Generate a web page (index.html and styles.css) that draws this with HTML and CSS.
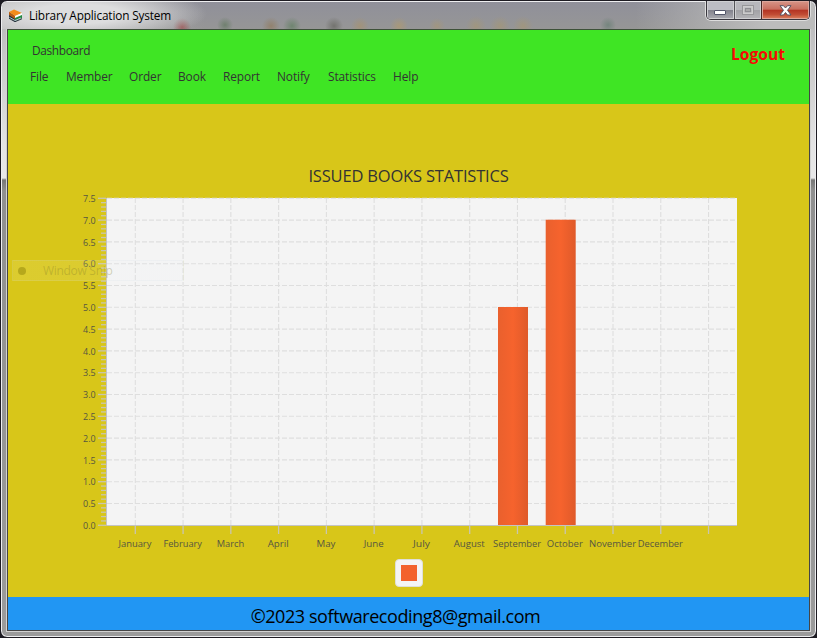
FILE: index.html
```html
<!DOCTYPE html>
<html lang="en">
<head>
<meta charset="utf-8">
<title>Library Application System</title>
<link rel="stylesheet" href="styles.css">
</head>
<body>
<div class="window">
  <div class="titlebar">
    <div class="glass"></div>
    <svg class="app-icon" width="15" height="15" viewBox="0 0 15 15">
      <path d="M1 4 7 8v5.500L1 10z" fill="#27343d"/>
      <path d="M1 4 7 8v3L1 7z" fill="#b65b12"/>
      <path d="M1 4 6 1.500 14 5 7 8z" fill="#f28c1c"/>
      <path d="M7 8l7-3v2L7 10z" fill="#fff"/>
      <path d="M7 10l7-3v3l-7 3z" fill="#238a43"/>
      <path d="M1.500 9.500 7 12.500l6-2.500" stroke="#b9cdd8" fill="none"/>
      <path d="M1 10.300 7 13.700l7-3" stroke="#26323b" fill="none"/>
    </svg>
    <span class="window-title">Library Application System</span>
    <div class="controls">
      <div class="control minimize"><svg width="13" height="6"><rect x=".5" y=".5" width="11" height="4" rx=".5" fill="#fff" stroke="#53566a"/></svg></div>
      <div class="control maximize"><svg width="13" height="10"><rect x="1.500" y="1.500" width="9" height="7" fill="none" stroke="#ccc" stroke-width="2"/><rect x=".5" y=".5" width="11" height="9" fill="none" stroke="#97979a"/><rect x="3.500" y="3.500" width="5" height="3" fill="#aaa" stroke="#8e8e92"/></svg></div>
      <div class="control close"><svg width="13" height="11" viewBox="0 0 13 11"><path d="M1 .7h3.500L6.500 3 8.500.7H12L8.500 5.300 12 10H8.500l-2-2.500L4.500 10H1l3.500-4.700z" fill="#fff" stroke="#575363"/></svg></div>
    </div>
  </div>
  <div class="client">
    <header class="header">
      <div class="nav">
        <div class="dashboard">Dashboard</div>
        <nav class="menu">
          <span>File</span><span>Member</span><span>Order</span><span>Book</span><span>Report</span><span>Notify</span><span>Statistics</span><span>Help</span>
        </nav>
      </div>
      <div class="logout">Logout</div>
    </header>
    <main class="content">
      <div class="snip"><i class="snip-dot"></i><span>Window Snip</span></div>
      <h1 class="chart-title">ISSUED BOOKS STATISTICS</h1>
      <svg class="chart" width="801" height="370" viewBox="8 190 801 370">
        <defs>
          <linearGradient id="bar"><stop offset="0" stop-color="#e9602d"/><stop offset=".5" stop-color="#f6632d"/><stop offset="1" stop-color="#df5a2a"/></linearGradient>
        </defs>
        <rect x="107" y="198" width="630" height="327" fill="#f4f4f4"/>
        <g id="grid" class="grid"></g>
        <g id="ticks" class="ticks"></g>
        <rect x="498" y="307" width="30" height="218" fill="url(#bar)"/>
        <rect x="545.7" y="219.700" width="30" height="305.300" fill="url(#bar)"/>
        <path class="axis" d="M106.500 198v327.500H737"/>
        <g id="labels" class="labels"></g>
      </svg>
      <div class="legend"><i class="swatch"></i></div>
    </main>
    <footer class="footer"><span>©2023 softwarecoding8@gmail.com</span></footer>
  </div>
</div>
<script src="chart.js"></script>
</body>
</html>
```
FILE: chart.js
```js
const ns = 'http://www.w3.org/2000/svg';
const bottom = 525.3, step = 21.8, column = 47.77, first = 135.3;
const months = [['January', 33], ['February', 38.5], ['March', 27.5], ['April', 21], ['May', 19], ['June', 20], ['July', 17], ['August', 31], ['September', 48], ['October', 36], ['November', 47], ['December', 45]];

function line(parent, x1, y1, x2, y2) {
  const el = document.createElementNS(ns, 'line');
  Object.entries({ x1, y1, x2, y2 }).forEach(([k, v]) => el.setAttribute(k, v));
  parent.appendChild(el);
}

function label(text, x, y, width, anchor) {
  const el = document.createElementNS(ns, 'text');
  el.setAttribute('x', x);
  el.setAttribute('y', y);
  el.setAttribute('textLength', width);
  el.setAttribute('lengthAdjust', 'spacingAndGlyphs');
  el.setAttribute('text-anchor', anchor);
  el.textContent = text;
  document.getElementById('labels').appendChild(el);
}

const grid = document.getElementById('grid');
const ticks = document.getElementById('ticks');
for (let i = 0; i <= 15; i++) {
  const y = bottom - i * step;
  if (i > 0) line(grid, 107, y, 737, y);
  line(ticks, 98, y, 106, y);
  label((i / 2).toFixed(1), 95.7, y + 3.6, 12.6, 'end');
  if (i < 15) {
    for (let j = 1; j < 5; j++) line(ticks, 101, y - j * step / 5, 106, y - j * step / 5);
  }
}
for (let i = 0; i < 13; i++) {
  const x = first + i * column;
  line(grid, x, 198, x, 525);
  line(ticks, x, 526, x, 534);
  if (months[i]) label(months[i][0], x - 0.4, 547.3, months[i][1], 'middle');
}
```
FILE: styles.css
```css
* { box-sizing: border-box; }
html { background: #1c1b22; }
body { margin: 0; font-family: "Open Sans", "Noto Sans", sans-serif; }
.window {
  width: 817px; height: 638px; padding: 0 6px 6px 5px;
  display: flex; flex-direction: column;
  border: 1px solid #1d1b22; border-radius: 7px;
  box-shadow: inset 0 0 0 1px #eeeef0;
  background: linear-gradient(#b3b3b6 0, #c8c8c8 55px, #e4e4e4 145px, #e8e8e8 177px, #777 179px, #909090 190px, #9b9b9b 100%);
}
.titlebar {
  position: relative; height: 28px; display: flex; align-items: center;
  margin: 0 -5px 0 -4px; padding-left: 6px;
  overflow: hidden;
}
.glass {
  position: absolute; inset: 1px 1px 0 0; border-radius: 5px 5px 0 0;
  background:
    radial-gradient(ellipse 130px 28px at 75px 12px, #ddddde 35%, transparent 100%),
    radial-gradient(circle 8px at 223px 23px, #70806f, transparent),
    radial-gradient(circle 9px at 180px 25px, #985c5c, transparent),
    radial-gradient(circle 9px at 269px 24px, #92826e, transparent),
    radial-gradient(circle 9px at 290px 24px, #6f8570, transparent),
    radial-gradient(circle 9px at 332px 24px, #73736f, transparent),
    radial-gradient(circle 9px at 358px 24px, #a2937a, transparent),
    radial-gradient(circle 9px at 397px 24px, #a8987a, transparent),
    radial-gradient(circle 8px at 435px 24px, #a19680, transparent),
    radial-gradient(circle 10px at 474px 24px, #a0967f, transparent),
    radial-gradient(circle 10px at 498px 24px, #a0967f, transparent),
    radial-gradient(circle 10px at 521px 24px, #a0967f, transparent),
    radial-gradient(circle 8px at 606px 23px, #75857e, transparent),
    linear-gradient(90deg, #bbb 0, transparent 25%, transparent 78%, #bcbcbc 94%),
    linear-gradient(#90909a, #969696);
}
.app-icon { position: relative; margin: 0 6px 0 0; }
.window-title { position: relative; font-size: 11.800px; letter-spacing: -.15px; color: #000; margin-top: -1px; white-space: nowrap; }
.controls {
  position: relative; display: flex; align-self: flex-start; margin: 0 5px 0 auto; height: 19px; width: 104px;
  border: 1px solid #38363d; border-top: 0; border-radius: 0 0 5px 5px; overflow: hidden;
  box-shadow: 0 0 0 1px #ddd;
}
.control { display: flex; align-items: center; justify-content: center; box-shadow: inset 0 0 0 1px #cfcfd2; }
.minimize { width: 28px; border-right: 1px solid #545458; padding-top: 6px; background: linear-gradient(#bcbcc3 48%, #83838d 52%, #aaaab0); }
.maximize { width: 27px; border-right: 1px solid #4b2926; background: linear-gradient(#b7b7bc 48%, #a2a2a6 52%, #b4b4b7); }
.close { width: 47px; box-shadow: inset 0 0 0 1px #dda69b; background: linear-gradient(#d79588 0, #c97060 45%, #b43524 52%, #c14c34 75%, #dc8462 100%); }
.client {
  flex: 1; display: flex; flex-direction: column; margin-left: 1px;
  border: 1px solid #454545; outline: 1px solid #d2d2d2;
  border-top-color: #3d5138;
}
.header { flex: none; height: 74px; background: #3fe524; display: flex; justify-content: space-between; color: #333; font-size: 11.900px; }
.nav { padding: 11px 0 0 22px; }
.dashboard { height: 26px; line-height: 18px; padding-left: 2px; letter-spacing: -.35px; }
.menu { display: grid; grid-template-columns: 36px 63px 49px 45px 54px 51px 65px 40px; line-height: 18px; letter-spacing: -.1px; }
.logout { margin: 13px 24px 0 0; font-size: 15.600px; line-height: 22px; font-weight: 700; color: #f50b05; }
.content { position: relative; flex: none; height: 493px; background: #d8c619; display: flex; flex-direction: column; align-items: center; }
.snip {
  position: absolute; left: 4px; top: 156px; z-index: 1; width: 172px; height: 21px; display: flex; align-items: center;
  font-size: 12px; letter-spacing: -.3px; color: rgba(120, 115, 40, .3);
  background: linear-gradient(90deg, rgba(240,235,160,.16) 0 94px, rgba(225,235,245,.06) 94px);
  border: 1px solid rgba(210, 220, 230, .15);
}
.snip-dot { width: 8px; height: 8px; border-radius: 50%; margin: 0 17px 0 5px; background: rgba(125, 115, 0, .4); }
.chart-title { margin: 61px 0 0; font-size: 16.500px; line-height: 22px; height: 25px; font-weight: 400; color: #333; letter-spacing: -.18px; white-space: nowrap; }
.chart { flex: none; display: block; }
.grid line { stroke: #dedede; stroke-width: 1.100; stroke-dasharray: 5 2; }
.ticks line { stroke: #c9c5b0; stroke-width: 1.300; }
.axis { fill: none; stroke: #c4c4c4; }
.labels { font-size: 9.500px; fill: #565640; }
.legend { width: 28px; height: 28px; margin-top: -1px; flex: none; background: #f4f4f4; border: 1px solid #dfdfd8; border-radius: 4px; padding: 5px; }
.swatch { display: block; width: 16px; height: 16px; background: #f3622d; }
.footer { flex: 1; background: #2196f3; display: flex; align-items: center; justify-content: center; color: #000; font-size: 18px; letter-spacing: -.42px; line-height: 24px; white-space: nowrap; }
.footer span { margin: 5px 26px 0 0; }
```
